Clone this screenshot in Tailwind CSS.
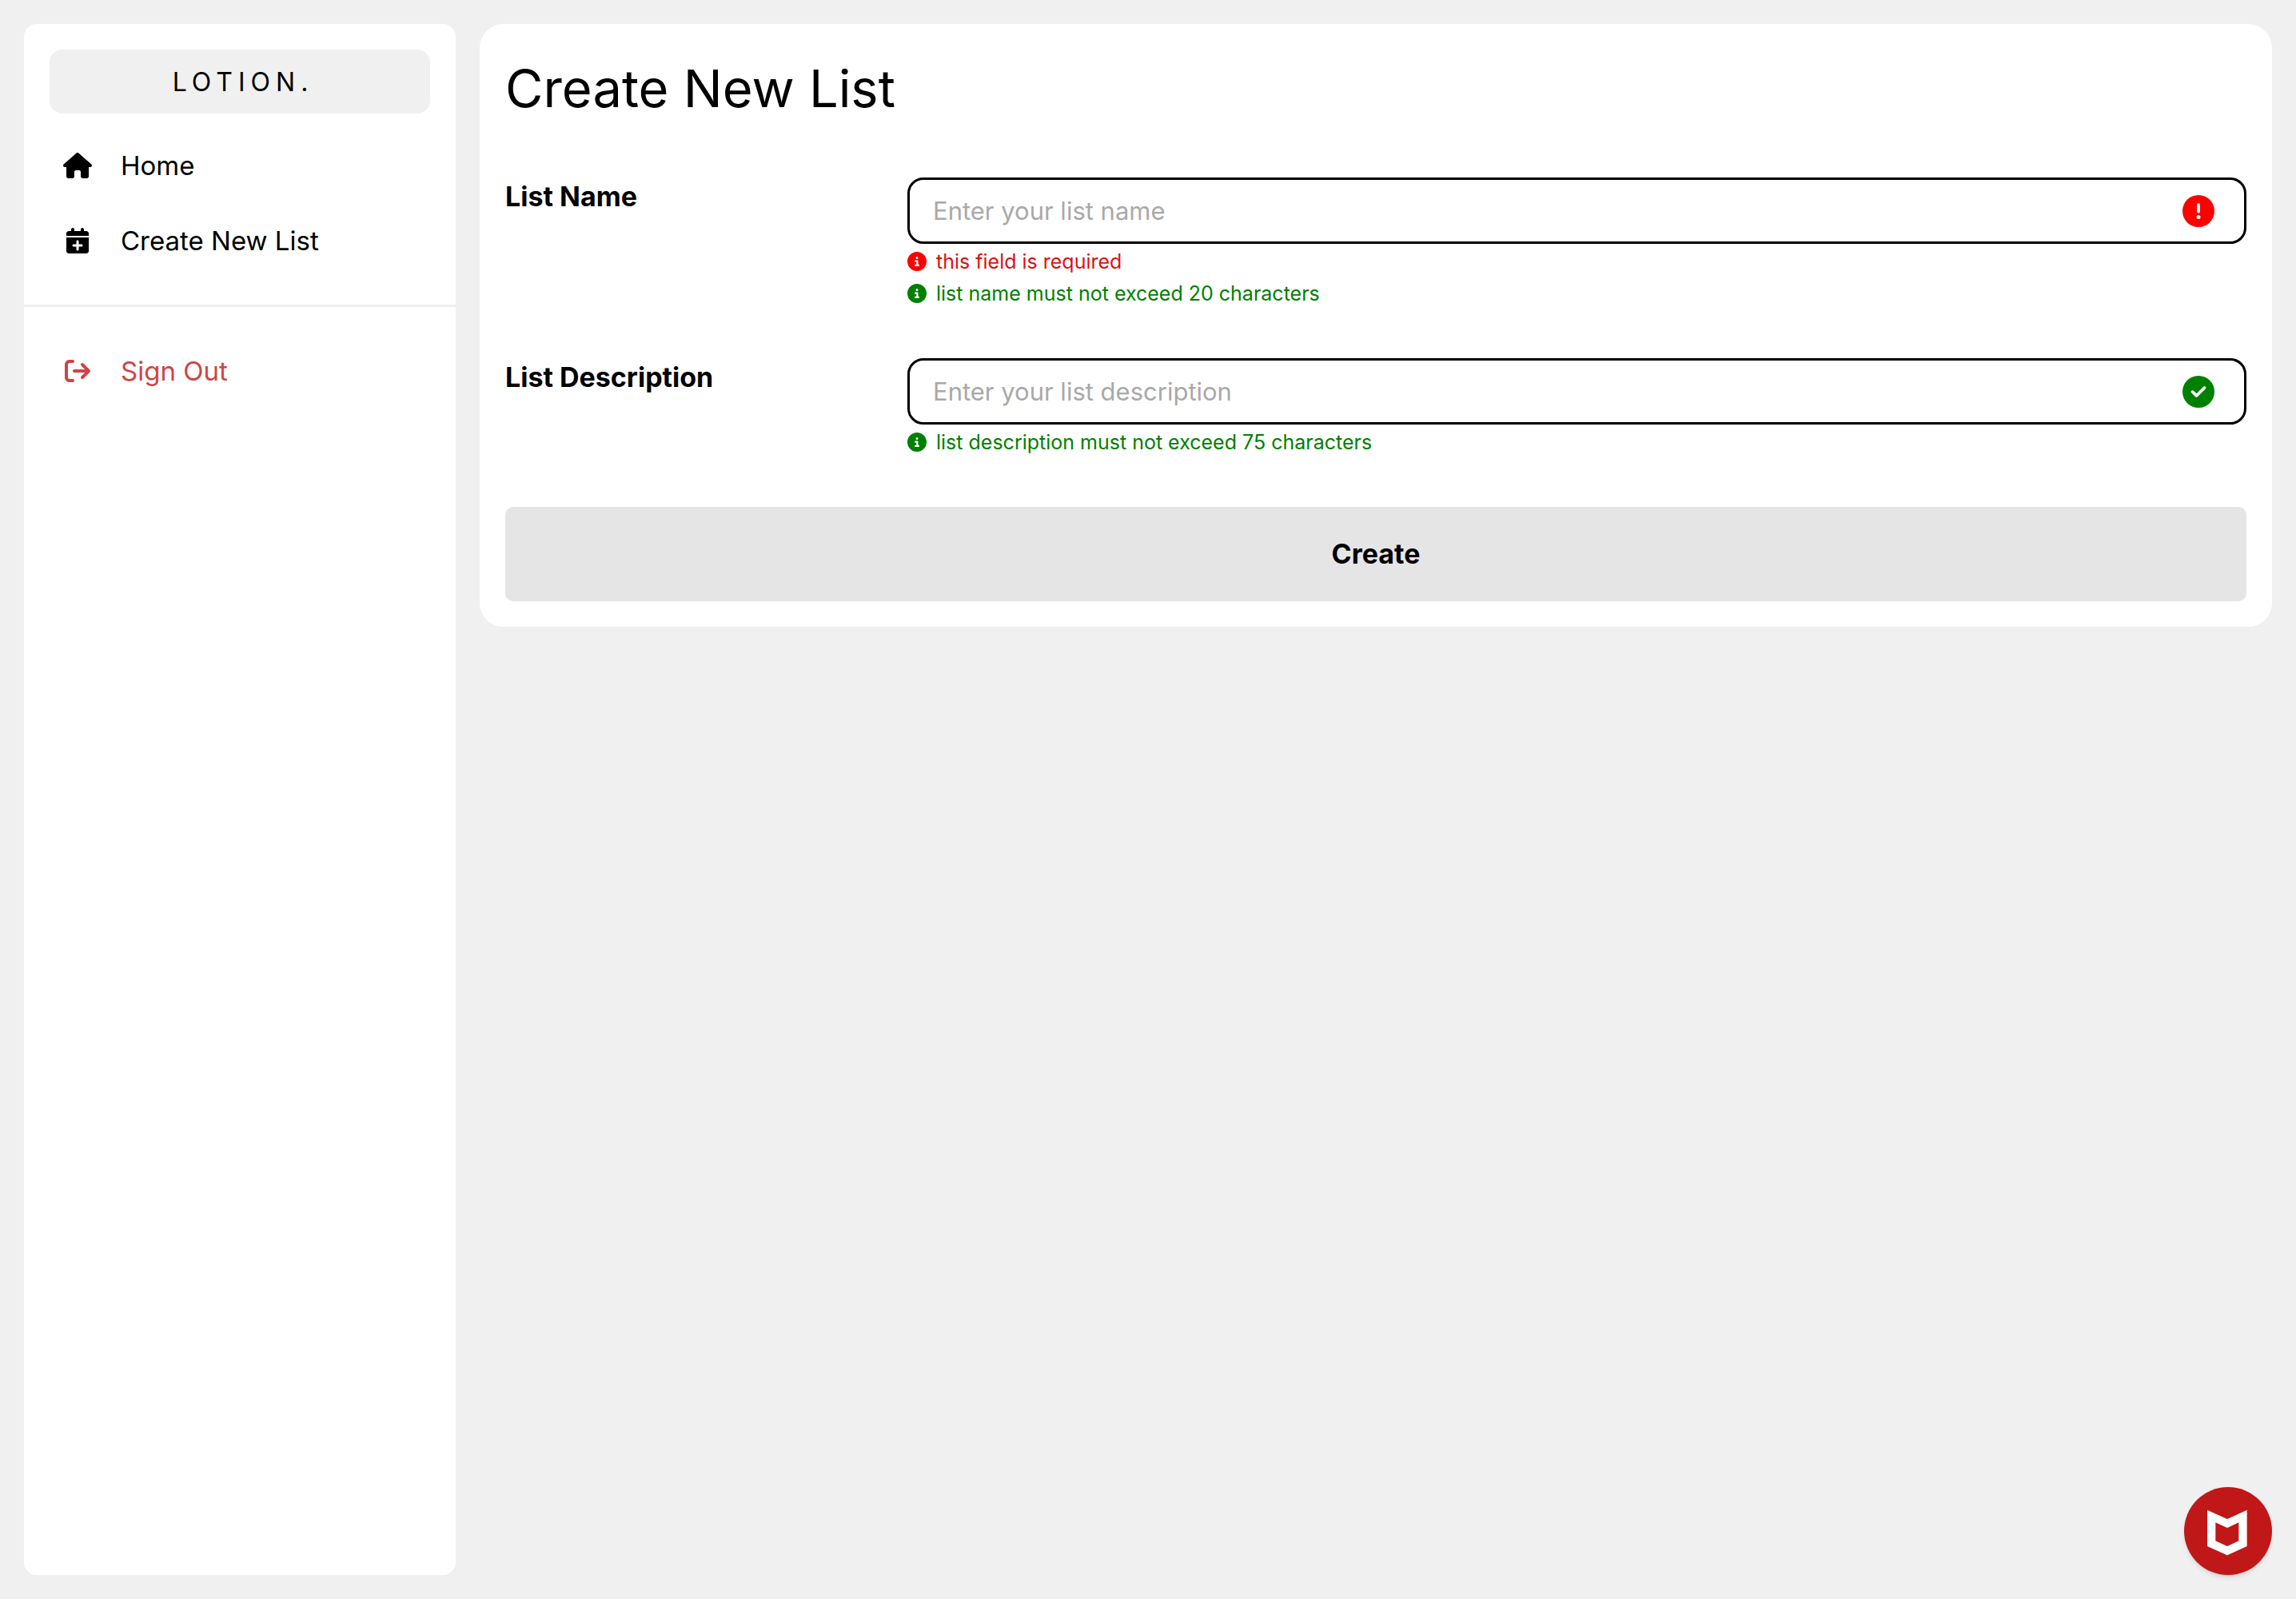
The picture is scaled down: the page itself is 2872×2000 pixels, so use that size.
<!DOCTYPE html>
<html lang="en">
<head>
<meta charset="utf-8">
<meta name="viewport" content="width=device-width, initial-scale=1">
<title>Lotion. | Create New List</title>
<script src="https://cdn.jsdelivr.net/npm/@tailwindcss/browser@4"></script>
</head>
<body class="min-h-screen bg-[#f0f0f0] font-[Inter,sans-serif] text-black">
<svg class="hidden" aria-hidden="true">
  <symbol id="info" viewBox="0 0 512 512"><path d="M256 512A256 256 0 1 0 256 0a256 256 0 1 0 0 512zM216 336h24V272H216c-13.3 0-24-10.7-24-24s10.7-24 24-24h48c13.3 0 24 10.7 24 24v88h8c13.3 0 24 10.7 24 24s-10.7 24-24 24H216c-13.3 0-24-10.7-24-24s10.7-24 24-24zm40-208a32 32 0 1 1 0 64 32 32 0 1 1 0-64z"/></symbol>
</svg>
<div class="flex min-h-screen items-stretch gap-[30px] p-[30px]">
  <aside class="flex w-[540px] shrink-0 flex-col rounded-2xl bg-white">
    <div class="px-8 pt-8">
      <div class="flex h-20 items-center justify-center rounded-2xl bg-[#f0f0f0] pt-0.5 pl-2 text-[32px] leading-10 tracking-[7px]">LOTION.</div>
    </div>
    <nav class="flex flex-col gap-[46px] px-[47px] pt-[41px] pb-[56px] text-[33px] leading-12">
      <a href="#" class="flex items-center gap-[34px]">
        <svg class="h-8 w-10" viewBox="0 0 576 512" fill="currentColor" aria-hidden="true"><path d="M575.8 255.5c0 18-15 32.1-32 32.1h-32l.7 160.2c0 2.7-.2 5.4-.5 8.1V472c0 22.1-17.9 40-40 40H456c-1.1 0-2.2 0-3.3-.1c-1.4 .1-2.8 .1-4.2 .1H416 392c-22.1 0-40-17.9-40-40V448 384c0-17.7-14.3-32-32-32H256c-17.7 0-32 14.3-32 32v64 24c0 22.1-17.9 40-40 40H160 128.1c-1.5 0-3-.1-4.5-.2c-1.2 .1-2.4 .2-3.6 .2H104c-22.1 0-40-17.9-40-40V360c0-.9 0-1.9 .1-2.8V287.6H32c-18 0-32-14-32-32.1c0-9 3-17 10-24L266.4 8c7-7 15-8 22-8s15 2 21 7L564.8 231.5c8 7 12 15 11 24z"/></svg>
        Home
      </a>
      <a href="#" class="flex items-center gap-[34px]">
        <svg class="h-8 w-10" viewBox="0 0 448 512" fill="currentColor" aria-hidden="true"><path d="M96 32V64H48C21.5 64 0 85.5 0 112v48H448V112c0-26.5-21.5-48-48-48H352V32c0-17.7-14.3-32-32-32s-32 14.3-32 32V64H160V32c0-17.7-14.3-32-32-32S96 14.3 96 32zM448 192H0V464c0 26.5 21.5 48 48 48H400c26.5 0 48-21.5 48-48V192zM224 248c13.3 0 24 10.7 24 24v56h56c13.3 0 24 10.7 24 24s-10.7 24-24 24H248v56c0 13.3-10.7 24-24 24s-24-10.7-24-24V376H144c-13.3 0-24-10.7-24-24s10.7-24 24-24h56V272c0-13.3 10.7-24 24-24z"/></svg>
        Create New List
      </a>
    </nav>
    <div class="border-t-3 border-[#f0f0f0] px-[47px] pt-[56px] text-[33px] leading-12 text-[#cf4444]">
      <a href="#" class="flex items-center gap-[34px]">
        <svg class="h-8 w-10" viewBox="0 0 512 512" fill="currentColor" aria-hidden="true"><path d="M502.6 278.6c12.5-12.5 12.5-32.8 0-45.3l-128-128c-12.5-12.5-32.8-12.5-45.3 0s-12.5 32.8 0 45.3L402.7 224 192 224c-17.7 0-32 14.3-32 32s14.3 32 32 32l210.7 0-73.4 73.4c-12.5 12.5-12.5 32.8 0 45.3s32.8 12.5 45.3 0l128-128zM160 96c17.7 0 32-14.3 32-32s-14.3-32-32-32L96 32C43 32 0 75 0 128L0 384c0 53 43 96 96 96l64 0c17.7 0 32-14.3 32-32s-14.3-32-32-32l-64 0c-17.7 0-32-14.3-32-32l0-256c0-17.7 14.3-32 32-32l64 0z"/></svg>
        Sign Out
      </a>
    </div>
  </aside>

  <main class="min-w-0 flex-1 self-start rounded-[30px] bg-white p-8">
    <h1 class="text-[65px] leading-[98px]">Create New List</h1>
    <form class="pt-[62px]">
      <div class="grid grid-cols-[503px_1fr] items-start">
        <label for="list-name" class="text-[34px] leading-12 font-bold">List Name</label>
        <div class="flex flex-col pb-[65px]">
          <div class="mb-1.5 flex h-[83px] items-center rounded-[20px] border-3 border-black pr-[37px] pl-[29px]">
            <input id="list-name" type="text" placeholder="Enter your list name" class="h-full min-w-0 flex-1 text-[31px] outline-none placeholder:text-[#a9a9a9]">
            <svg class="size-10 fill-[red]" viewBox="0 0 512 512" aria-hidden="true"><path d="M256 512A256 256 0 1 0 256 0a256 256 0 1 0 0 512zm0-384c13.3 0 24 10.7 24 24V264c0 13.3-10.7 24-24 24s-24-10.7-24-24V152c0-13.3 10.7-24 24-24zM224 352a32 32 0 1 1 64 0 32 32 0 1 1 -64 0z"/></svg>
          </div>
          <div class="flex flex-col gap-2">
            <p class="flex items-center gap-3 text-[25px] leading-8 text-[#e01010]"><svg class="size-6 fill-[red]" aria-hidden="true"><use href="#info"/></svg>this field is required</p>
            <p class="flex items-center gap-3 text-[25px] leading-8 text-[green]"><svg class="size-6" fill="currentColor" aria-hidden="true"><use href="#info"/></svg>list name must not exceed 20 characters</p>
          </div>
        </div>
      </div>
      <div class="grid grid-cols-[503px_1fr] items-start">
        <label for="list-description" class="text-[34px] leading-12 font-bold">List Description</label>
        <div class="flex flex-col pb-[65px]">
          <div class="mb-1.5 flex h-[83px] items-center rounded-[20px] border-3 border-black pr-[37px] pl-[29px]">
            <input id="list-description" type="text" placeholder="Enter your list description" class="h-full min-w-0 flex-1 text-[31px] outline-none placeholder:text-[#a9a9a9]">
            <svg class="size-10 fill-[green]" viewBox="0 0 512 512" aria-hidden="true"><path d="M256 512A256 256 0 1 0 256 0a256 256 0 1 0 0 512zM369 209L241 337c-9.4 9.4-24.6 9.4-33.9 0l-64-64c-9.4-9.4-9.4-24.6 0-33.9s24.6-9.4 33.9 0l47 47L335 175c9.4-9.4 24.6-9.4 33.9 0s9.4 24.6 0 33.9z"/></svg>
          </div>
          <p class="flex items-center gap-3 text-[25px] leading-8 text-[green]"><svg class="size-6" fill="currentColor" aria-hidden="true"><use href="#info"/></svg>list description must not exceed 75 characters</p>
        </div>
      </div>
      <button type="submit" class="h-[118px] w-full rounded-[10px] bg-[#e5e5e5] text-[34px] leading-12 font-bold">Create</button>
    </form>
  </main>
</div>

<button type="button" aria-label="Open security panel" class="fixed right-[30px] bottom-[30px] size-[110px] rounded-full bg-[#c01818] shadow-md">
  <svg class="size-full" viewBox="0 0 330 330" aria-hidden="true"><path fill="#fff" fill-rule="evenodd" d="M87 86L162 120L236 86V222L162 256L87 222ZM118 133L162 153L205 133V202L162 222L118 202Z"/></svg>
</button>
</body>
</html>
